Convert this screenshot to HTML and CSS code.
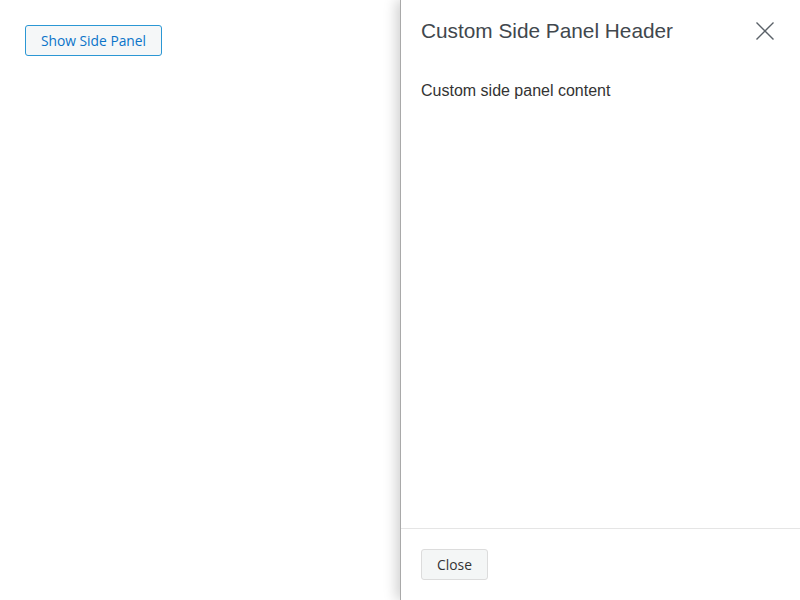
FILE: index.html
```html
<!DOCTYPE html>
<html>
<head>
<meta charset="utf-8">
<link rel="stylesheet" href="styles.css">
</head>
<body>
<div class="page">
  <button class="show-btn">Show Side Panel</button>
</div>
<aside class="panel">
  <header class="panel-header">
    <h2 class="panel-title">Custom Side Panel Header</h2>
    <button class="close-x" aria-label="Close">
      <svg width="20" height="20" viewBox="0 0 20 20"><path d="M1.5 1.5 L18.5 18.5 M18.5 1.5 L1.5 18.5" stroke="#5a6168" stroke-width="1.4" fill="none"/></svg>
    </button>
  </header>
  <div class="panel-body">Custom side panel content</div>
  <footer class="panel-footer">
    <button class="close-btn">Close</button>
  </footer>
</aside>
</body>
</html>
```

FILE: styles.css
```css
html, body { margin: 0; padding: 0; background: #fff; height: 100%; }
body { position: relative; overflow: hidden; }
.page { padding: 25px; }
.show-btn {
  font-family: "Open Sans", "Noto Sans", sans-serif;
  font-size: 13.8px;
  color: #0b74c9;
  background: #f5f7f8;
  border: 1px solid #2b97d4;
  border-radius: 3px;
  height: 31px;
  width: 137px;
  padding: 0;
  line-height: 29px;
}
.panel {
  position: absolute;
  top: 0; right: 0; bottom: 0;
  width: 399px;
  background: #fff;
  border-left: 1px solid #a9a9a9;
  box-shadow: -4px 0 12px rgba(0,0,0,0.18);
  display: flex;
  flex-direction: column;
}
.panel-header {
  display: flex;
  align-items: flex-start;
  justify-content: space-between;
  padding: 19px 25px 0 20px;
}
.panel-title {
  margin: 0;
  font-family: "Liberation Sans", Arial, sans-serif;
  font-weight: normal;
  font-size: 20.8px;
  line-height: 24px;
  color: #41474d;
}
.close-x {
  border: 0; background: none; padding: 0; margin-top: 2px;
  width: 20px; height: 20px; display: block;
}
.panel-body {
  flex: 1;
  padding: 38px 20px 0 20px;
  font-family: "Liberation Sans", Arial, sans-serif;
  font-size: 16px;
  line-height: 20px;
  color: #333;
}
.panel-footer {
  border-top: 1px solid #e5e5e5;
  height: 72px;
  padding: 20px 20px 0 20px;
  box-sizing: border-box;
}
.close-btn {
  font-family: "Open Sans", "Noto Sans", sans-serif;
  font-size: 13.8px;
  color: #333;
  background: #f4f6f6;
  border: 1px solid #dcdcdc;
  border-radius: 3px;
  width: 67px;
  height: 31px;
  padding: 0;
}
```
